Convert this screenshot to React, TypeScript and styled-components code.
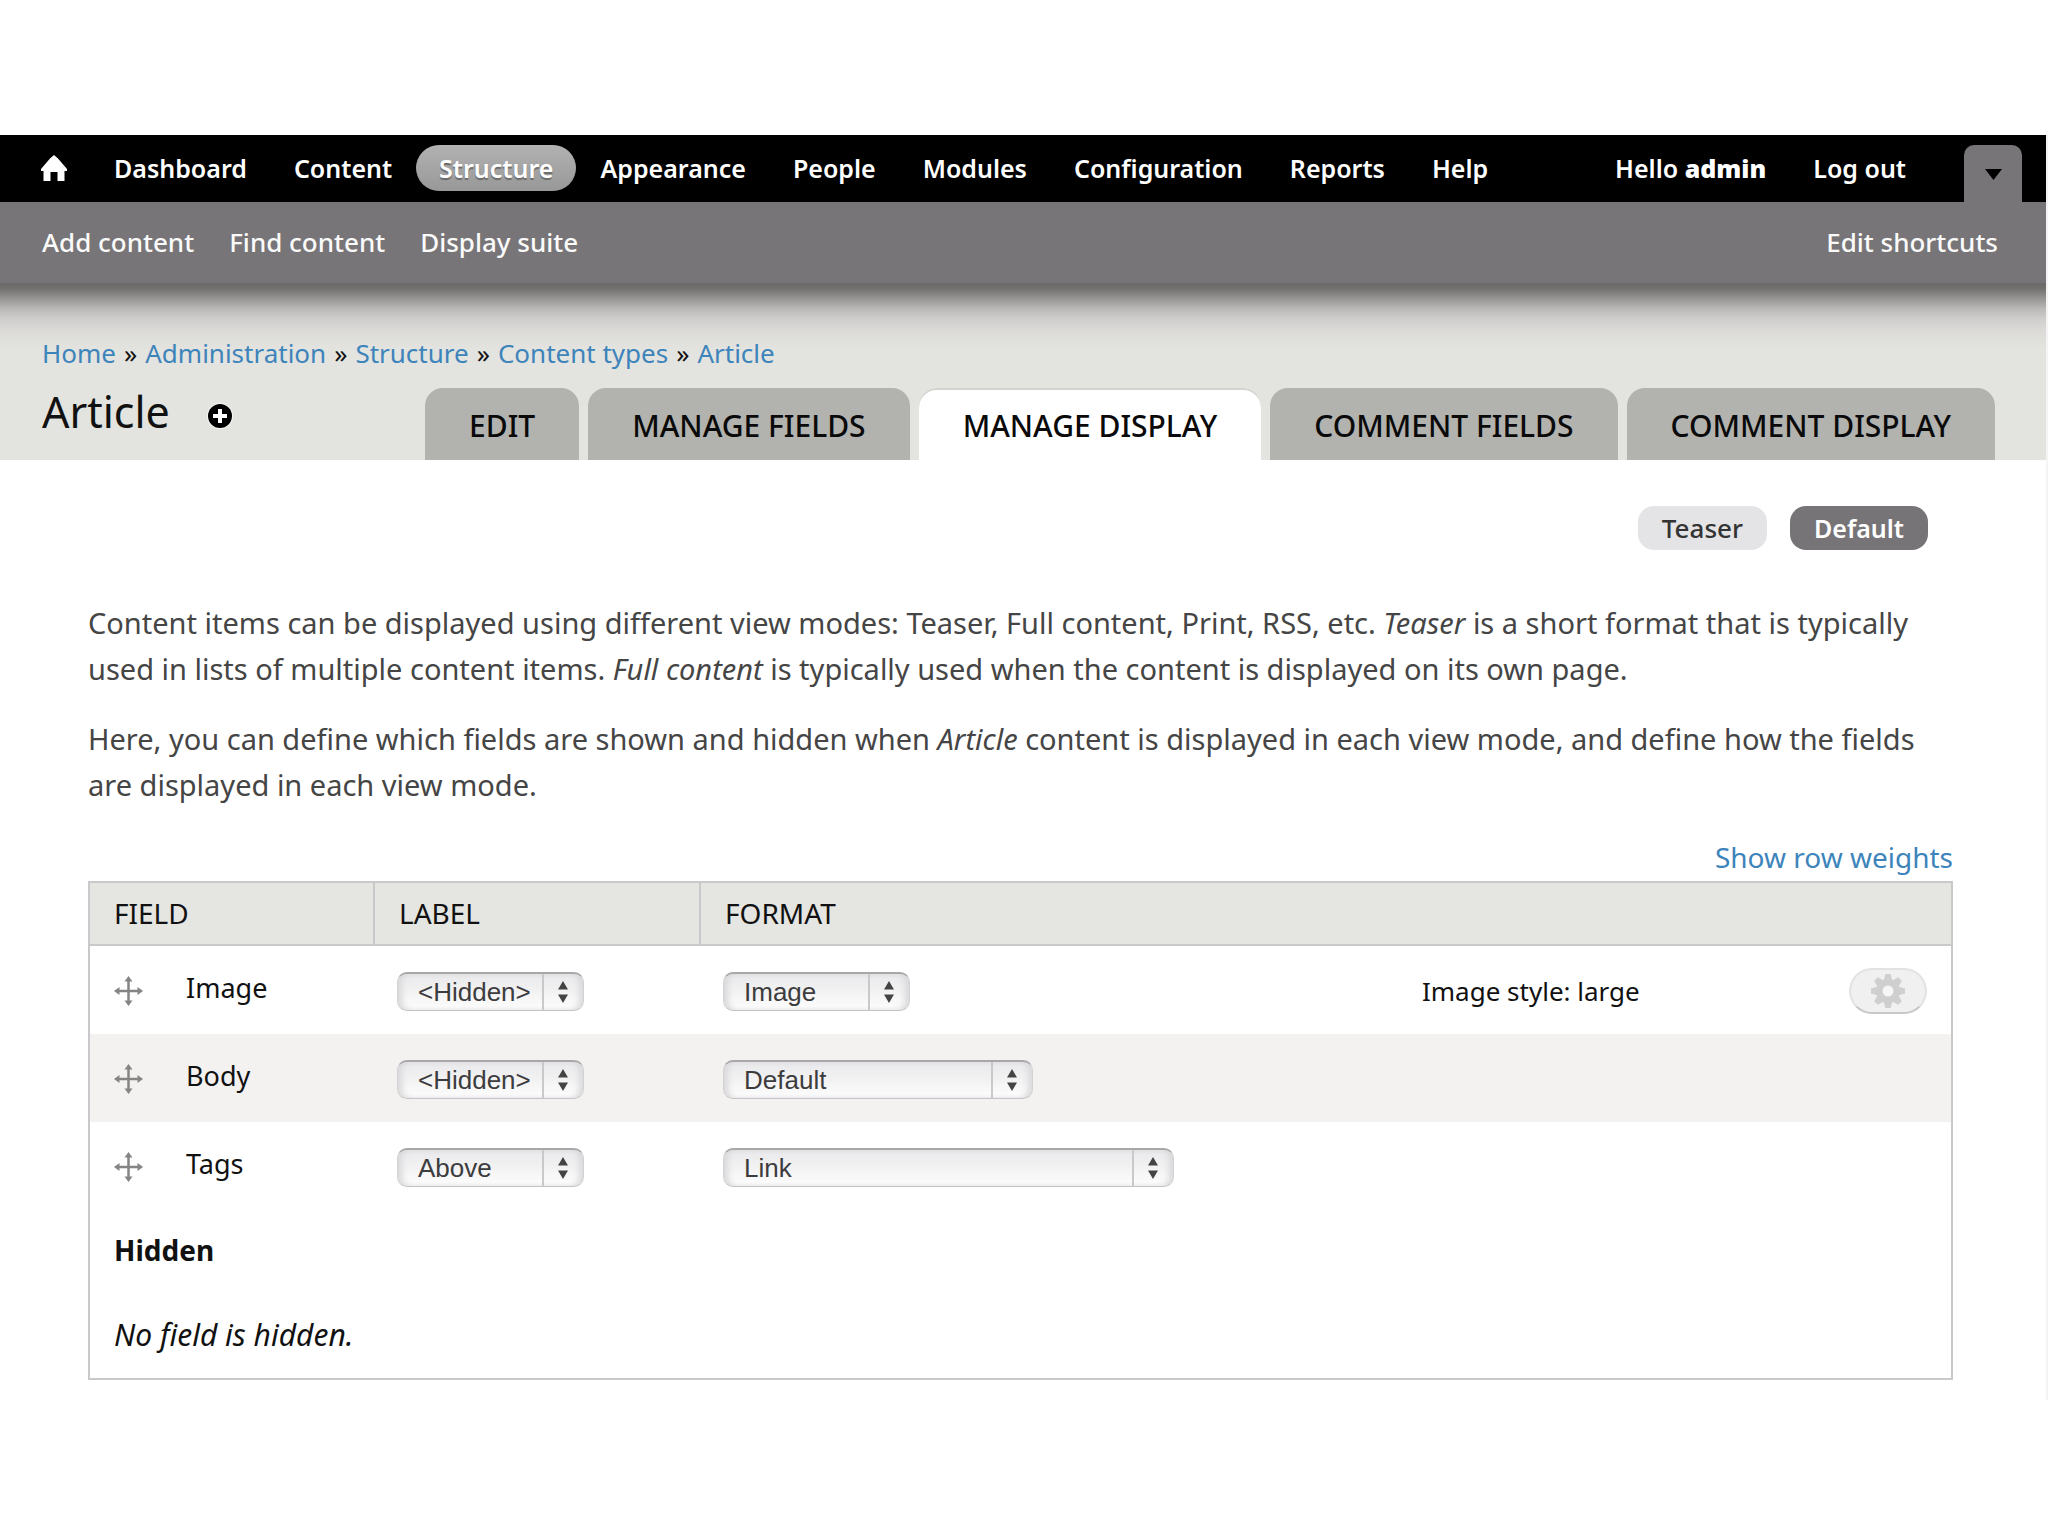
import React from "react";
import styled, { createGlobalStyle } from "styled-components";

const GlobalStyle = createGlobalStyle`
  *, *::before, *::after { box-sizing: border-box; }
  body {
    margin: 0;
    background: #fff;
    color: #111;
    font-family: "Noto Sans", "Open Sans", sans-serif;
    font-size: 26px;
  }
  a { color: #3d84bb; text-decoration: none; }
  ul, ol { margin: 0; padding: 0; list-style: none; }
`;

const Page = styled.div`
  padding-top: 135px;
`;

const Frame = styled.div`
  padding-bottom: 20px;
  border-right: 2px solid #f4f4f4;
`;

const Toolbar = styled.nav`
  display: flex;
  align-items: center;
  height: 67px;
  padding: 0 24px 0 18px;
  background: #000;
`;

const Menu = styled.ul<{ $end?: boolean }>`
  display: flex;
  gap: 1px;
  padding-bottom: 2px;
  ${(p) => p.$end && "margin-left: auto;"}
`;

const MenuLink = styled.a<{ $active?: boolean }>`
  display: flex;
  align-items: center;
  height: 46px;
  padding: 0 23px;
  border-radius: 23px;
  background: ${(p) => (p.$active ? "linear-gradient(#b2b2b2, #989898)" : "none")};
  color: #fff;
  font-size: 25px;
  font-weight: 600;
  white-space: pre;
  ${(p) => p.$active && "text-shadow: 0 2px 1px #6a6a6a;"}
`;

const DrawerToggle = styled.button`
  display: flex;
  align-items: center;
  justify-content: center;
  align-self: flex-end;
  width: 58px;
  height: 57px;
  margin-left: 35px;
  padding: 2px 0 0;
  border: 0;
  border-radius: 10px 10px 0 0;
  background: #777577;
`;

const ShortcutBar = styled.div`
  display: flex;
  align-items: center;
  justify-content: space-between;
  height: 81px;
  padding: 0 48px 2px 42px;
  background: #777577;
`;

const Shortcuts = styled.ul`
  display: flex;
  gap: 35px;
`;

const ShortcutLink = styled.a`
  color: #fafafa;
  font-size: 26px;
  font-weight: 500;
`;

const Branding = styled.header`
  padding: 52px 51px 0 42px;
  background:
    linear-gradient(
      #6a6968 0,
      #737271 6px,
      #989796 16px,
      #bab9b7 26px,
      #cfcecc 36px,
      #dcdbd8 48px,
      rgba(227, 227, 223, 0) 66px
    ),
    #e3e3df;
`;

const Breadcrumb = styled.ol`
  display: flex;
  line-height: 36px;
`;

const Separator = styled.span`
  padding: 0 8px;
`;

const TitleRow = styled.div`
  display: flex;
  align-items: flex-start;
  justify-content: space-between;
  margin-top: 17px;
`;

const TitleGroup = styled.div`
  display: flex;
  align-items: center;
  gap: 37px;
`;

const Title = styled.h1`
  margin: 0;
  font-size: 43px;
  font-weight: 400;
  line-height: 48px;
`;

const IconLink = styled.a`
  display: flex;
  padding-top: 8px;
`;

const Tabs = styled.ul`
  display: flex;
  gap: 9px;
`;

const Tab = styled.a<{ $active?: boolean }>`
  display: block;
  height: 72px;
  padding: 0 44px;
  border-radius: 18px 18px 0 0;
  background: ${(p) => (p.$active ? "#fff" : "#b2b2af")};
  box-shadow: ${(p) => (p.$active ? "inset 0 2px 0 #d3d3cf" : "none")};
  color: #0a0a0a;
  font-size: 30px;
  font-weight: 500;
  line-height: 76px;
  text-transform: uppercase;
`;

const Content = styled.main`
  padding: 46px 93px 0 88px;
`;

const ViewModes = styled.ul`
  display: flex;
  justify-content: flex-end;
  gap: 23px;
  margin-right: 25px;
`;

const ViewMode = styled.a<{ $active?: boolean }>`
  display: flex;
  align-items: center;
  height: 44px;
  padding: 0 24px;
  border-radius: 16px;
  background: ${(p) => (p.$active ? "#767476" : "#e4e3e5")};
  color: ${(p) => (p.$active ? "#fff" : "#333")};
  font-size: ${(p) => (p.$active ? "25px" : "26px")};
  font-weight: ${(p) => (p.$active ? 600 : 500)};
`;

const Help = styled.div`
  margin-top: 50px;
  color: #454545;
  font-size: 29px;
  line-height: 46px;

  p { margin: 0 0 24px; }
`;

const WeightsRow = styled.div`
  display: flex;
  justify-content: flex-end;
  margin-top: 30px;
  padding-bottom: 5px;
  font-size: 28px;
  line-height: 38px;
`;

const FieldTable = styled.table`
  width: 100%;
  border: 2px solid #c9c8ca;
  border-spacing: 0;
  table-layout: fixed;
`;

const Column = styled.col<{ $width?: number }>`
  width: ${(p) => (p.$width ? `${p.$width}px` : "auto")};
`;

const HeadCell = styled.th`
  height: 63px;
  padding: 0 24px 2px;
  border-bottom: 2px solid #c9c8ca;
  background: #e5e5e2;
  font-size: 28px;
  font-weight: 400;
  text-align: left;
  text-transform: uppercase;

  & + & { border-left: 2px solid #c9c8ca; }
`;

const Row = styled.tr<{ $shaded?: boolean }>`
  background: ${(p) => (p.$shaded ? "#f3f2f0" : "#fff")};
`;

const Cell = styled.td`
  height: 88px;
  padding: 2px 24px 0;
`;

const NoteCell = styled.td<{ $strong?: boolean }>`
  height: 84px;
  padding: 0 24px 4px;
  font-size: ${(p) => (p.$strong ? "28px" : "30px")};
  font-weight: ${(p) => (p.$strong ? 700 : 400)};
  font-style: ${(p) => (p.$strong ? "normal" : "italic")};
`;

const FieldName = styled.div`
  display: flex;
  align-items: center;
  gap: 43px;
  font-size: 27px;
`;

const FieldLabel = styled.span`
  padding-bottom: 8px;
`;

const SelectBox = styled.span<{ $width: number }>`
  position: relative;
  display: block;
  width: ${(p) => p.$width}px;
`;

const Select = styled.select`
  display: block;
  width: 100%;
  height: 39px;
  padding: 0 44px 0 20px;
  border: 1px solid #d2d1d3;
  border-top: 2px solid #a9a7aa;
  border-bottom-color: #c4c3c5;
  border-radius: 10px;
  appearance: none;
  background: linear-gradient(#e9e8ea, #fdfdfd);
  box-shadow: inset 6px 0 6px -2px #d9d8da, inset -6px 0 6px -2px #d9d8da;
  color: #3c3c3e;
  font-family: "Liberation Sans", sans-serif;
  font-size: 26px;
`;

const Stepper = styled.span`
  position: absolute;
  top: 2px;
  right: 2px;
  bottom: 1px;
  display: flex;
  align-items: center;
  width: 40px;
  padding-left: 13px;
  border-left: 2px solid #c9c8ca;
  pointer-events: none;
`;

const SettingsButton = styled.button`
  display: flex;
  align-items: center;
  justify-content: center;
  width: 78px;
  height: 46px;
  margin-left: auto;
  padding: 0;
  border: 2px solid #e2e2e2;
  border-bottom-color: #c8c8c8;
  border-radius: 23px;
  background: #f1f0f1;
`;

const HomeIcon = () => (
  <svg width="26" height="26" viewBox="0 0 26 26" fill="#fff" aria-label="Home">
    <path d="M13 0 L17 3.500 L26 14 V16 H23.500 V26 H16.500 V17 H9.500 V26 H2.500 V16 H0 V14 L9 3.500 Z" />
  </svg>
);

const ArrowIcon = () => (
  <svg width="17" height="11" viewBox="0 0 17 11" aria-hidden="true">
    <path d="M0 0 H17 L8.500 11 Z" fill="#000" />
  </svg>
);

const AddIcon = () => (
  <svg width="26" height="26" viewBox="0 0 26 26" aria-hidden="true">
    <circle cx="13" cy="13" r="13" fill="#f6f6f4" />
    <circle cx="13" cy="13" r="12" fill="#000" />
    <path d="M11 6 H15 V11 H20 V15 H15 V20 H11 V15 H6 V11 H11 Z" fill="#fff" />
  </svg>
);

const DragIcon = () => (
  <svg width="29" height="30" viewBox="0 0 29 30" aria-hidden="true">
    <path d="M14.500 3 V27 M3 15 H26" stroke="#858585" strokeWidth="2.500" fill="none" />
    <path
      d="M14.500 0 L18.500 5.500 H10.500 Z M14.500 30 L18.500 24.500 H10.500 Z M0 15 L5.500 11 V19 Z M29 15 L23.500 11 V19 Z"
      fill="#858585"
    />
  </svg>
);

const StepperIcon = () => (
  <svg width="12" height="24" viewBox="0 0 12 24" aria-hidden="true">
    <path d="M6 1 L11 9.500 H1 Z M6 23 L11 14.500 H1 Z" fill="#444" />
  </svg>
);

const GEAR_TEETH = [0, 45, 90, 135, 180, 225, 270, 315];

const GearIcon = () => (
  <svg width="34" height="34" viewBox="-17 -17 34 34" aria-hidden="true">
    <g fill="#d0cfd0">
      <circle r="12" />
      {GEAR_TEETH.map((angle) => (
        <path key={angle} d="M-4.500 -10 L-2.500 -17 H2.500 L4.500 -10 Z" transform={`rotate(${angle})`} />
      ))}
    </g>
    <circle r="5.500" fill="#f6f6f6" />
  </svg>
);

const menu = ["Dashboard", "Content", "Structure", "Appearance", "People", "Modules", "Configuration", "Reports", "Help"];
const shortcuts = ["Add content", "Find content", "Display suite"];
const trail = ["Home", "Administration", "Structure", "Content types", "Article"];
const tabs = ["Edit", "Manage fields", "Manage display", "Comment fields", "Comment display"];

const fields = [
  { name: "Image", label: "<Hidden>", format: "Image", width: 187, summary: "Image style: large" },
  { name: "Body", label: "<Hidden>", format: "Default", width: 310 },
  { name: "Tags", label: "Above", format: "Link", width: 451 },
];

function Dropdown({ name, value, options, width }: { name: string; value: string; options: string[]; width: number }) {
  return (
    <SelectBox $width={width}>
      <Select aria-label={name} defaultValue={value}>
        {options.map((o) => (
          <option key={o}>{o}</option>
        ))}
      </Select>
      <Stepper>
        <StepperIcon />
      </Stepper>
    </SelectBox>
  );
}

export default function App() {
  return (
    <Page>
      <GlobalStyle />
      <Frame>
        <Toolbar>
          <Menu>
            <li>
              <MenuLink href="#home"><HomeIcon /></MenuLink>
            </li>
            {menu.map((m) => (
              <li key={m}>
                <MenuLink href={`#${m}`} $active={m === "Structure"}>{m}</MenuLink>
              </li>
            ))}
          </Menu>
          <Menu $end>
            <li>
              <MenuLink href="#user">Hello <strong>admin</strong></MenuLink>
            </li>
            <li>
              <MenuLink href="#logout">Log out</MenuLink>
            </li>
          </Menu>
          <DrawerToggle type="button" aria-label="Toggle shortcuts">
            <ArrowIcon />
          </DrawerToggle>
        </Toolbar>
        <ShortcutBar>
          <Shortcuts>
            {shortcuts.map((s) => (
              <li key={s}><ShortcutLink href="#shortcut">{s}</ShortcutLink></li>
            ))}
          </Shortcuts>
          <ShortcutLink href="#edit-shortcuts">Edit shortcuts</ShortcutLink>
        </ShortcutBar>
        <Branding>
          <Breadcrumb>
            {trail.map((t, i) => (
              <li key={t}>
                {i > 0 && <Separator>»</Separator>}
                <a href="#trail">{t}</a>
              </li>
            ))}
          </Breadcrumb>
          <TitleRow>
            <TitleGroup>
              <Title>Article</Title>
              <IconLink href="#add-shortcut" aria-label="Add to shortcuts"><AddIcon /></IconLink>
            </TitleGroup>
            <Tabs>
              {tabs.map((t) => (
                <li key={t}>
                  <Tab href="#tab" $active={t === "Manage display"}>{t}</Tab>
                </li>
              ))}
            </Tabs>
          </TitleRow>
        </Branding>
        <Content>
          <ViewModes>
            <li><ViewMode href="#teaser">Teaser</ViewMode></li>
            <li><ViewMode href="#default" $active>Default</ViewMode></li>
          </ViewModes>
          <Help>
            <p>
              Content items can be displayed using different view modes: Teaser, Full content, Print, RSS, etc.{" "}
              <em>Teaser</em> is a short format that is typically used in lists of multiple content items.{" "}
              <em>Full content</em> is typically used when the content is displayed on its own page.
            </p>
            <p>
              Here, you can define which fields are shown and hidden when <em>Article</em> content is displayed in
              each view mode, and define how the fields are displayed in each view mode.
            </p>
          </Help>
          <WeightsRow>
            <a href="#weights">Show row weights</a>
          </WeightsRow>
          <FieldTable>
            <colgroup>
              <Column $width={283} />
              <Column $width={326} />
              <Column />
              <Column $width={427} />
              <Column $width={126} />
            </colgroup>
            <thead>
              <tr>
                <HeadCell scope="col">Field</HeadCell>
                <HeadCell scope="col">Label</HeadCell>
                <HeadCell scope="col" colSpan={3}>Format</HeadCell>
              </tr>
            </thead>
            <tbody>
              {fields.map((f, i) => (
                <Row key={f.name} $shaded={i % 2 === 1}>
                  <Cell>
                    <FieldName>
                      <DragIcon />
                      <FieldLabel>{f.name}</FieldLabel>
                    </FieldName>
                  </Cell>
                  <Cell>
                    <Dropdown name={`Label for ${f.name}`} value={f.label} options={["<Hidden>", "Above"]} width={187} />
                  </Cell>
                  <Cell>
                    <Dropdown name={`Format for ${f.name}`} value={f.format} options={[f.format]} width={f.width} />
                  </Cell>
                  <Cell>{f.summary}</Cell>
                  <Cell>
                    {f.summary && (
                      <SettingsButton type="button" aria-label={`${f.name} settings`}>
                        <GearIcon />
                      </SettingsButton>
                    )}
                  </Cell>
                </Row>
              ))}
              <Row>
                <NoteCell colSpan={5} $strong>Hidden</NoteCell>
              </Row>
              <Row>
                <NoteCell colSpan={5}>No field is hidden.</NoteCell>
              </Row>
            </tbody>
          </FieldTable>
        </Content>
      </Frame>
    </Page>
  );
}
